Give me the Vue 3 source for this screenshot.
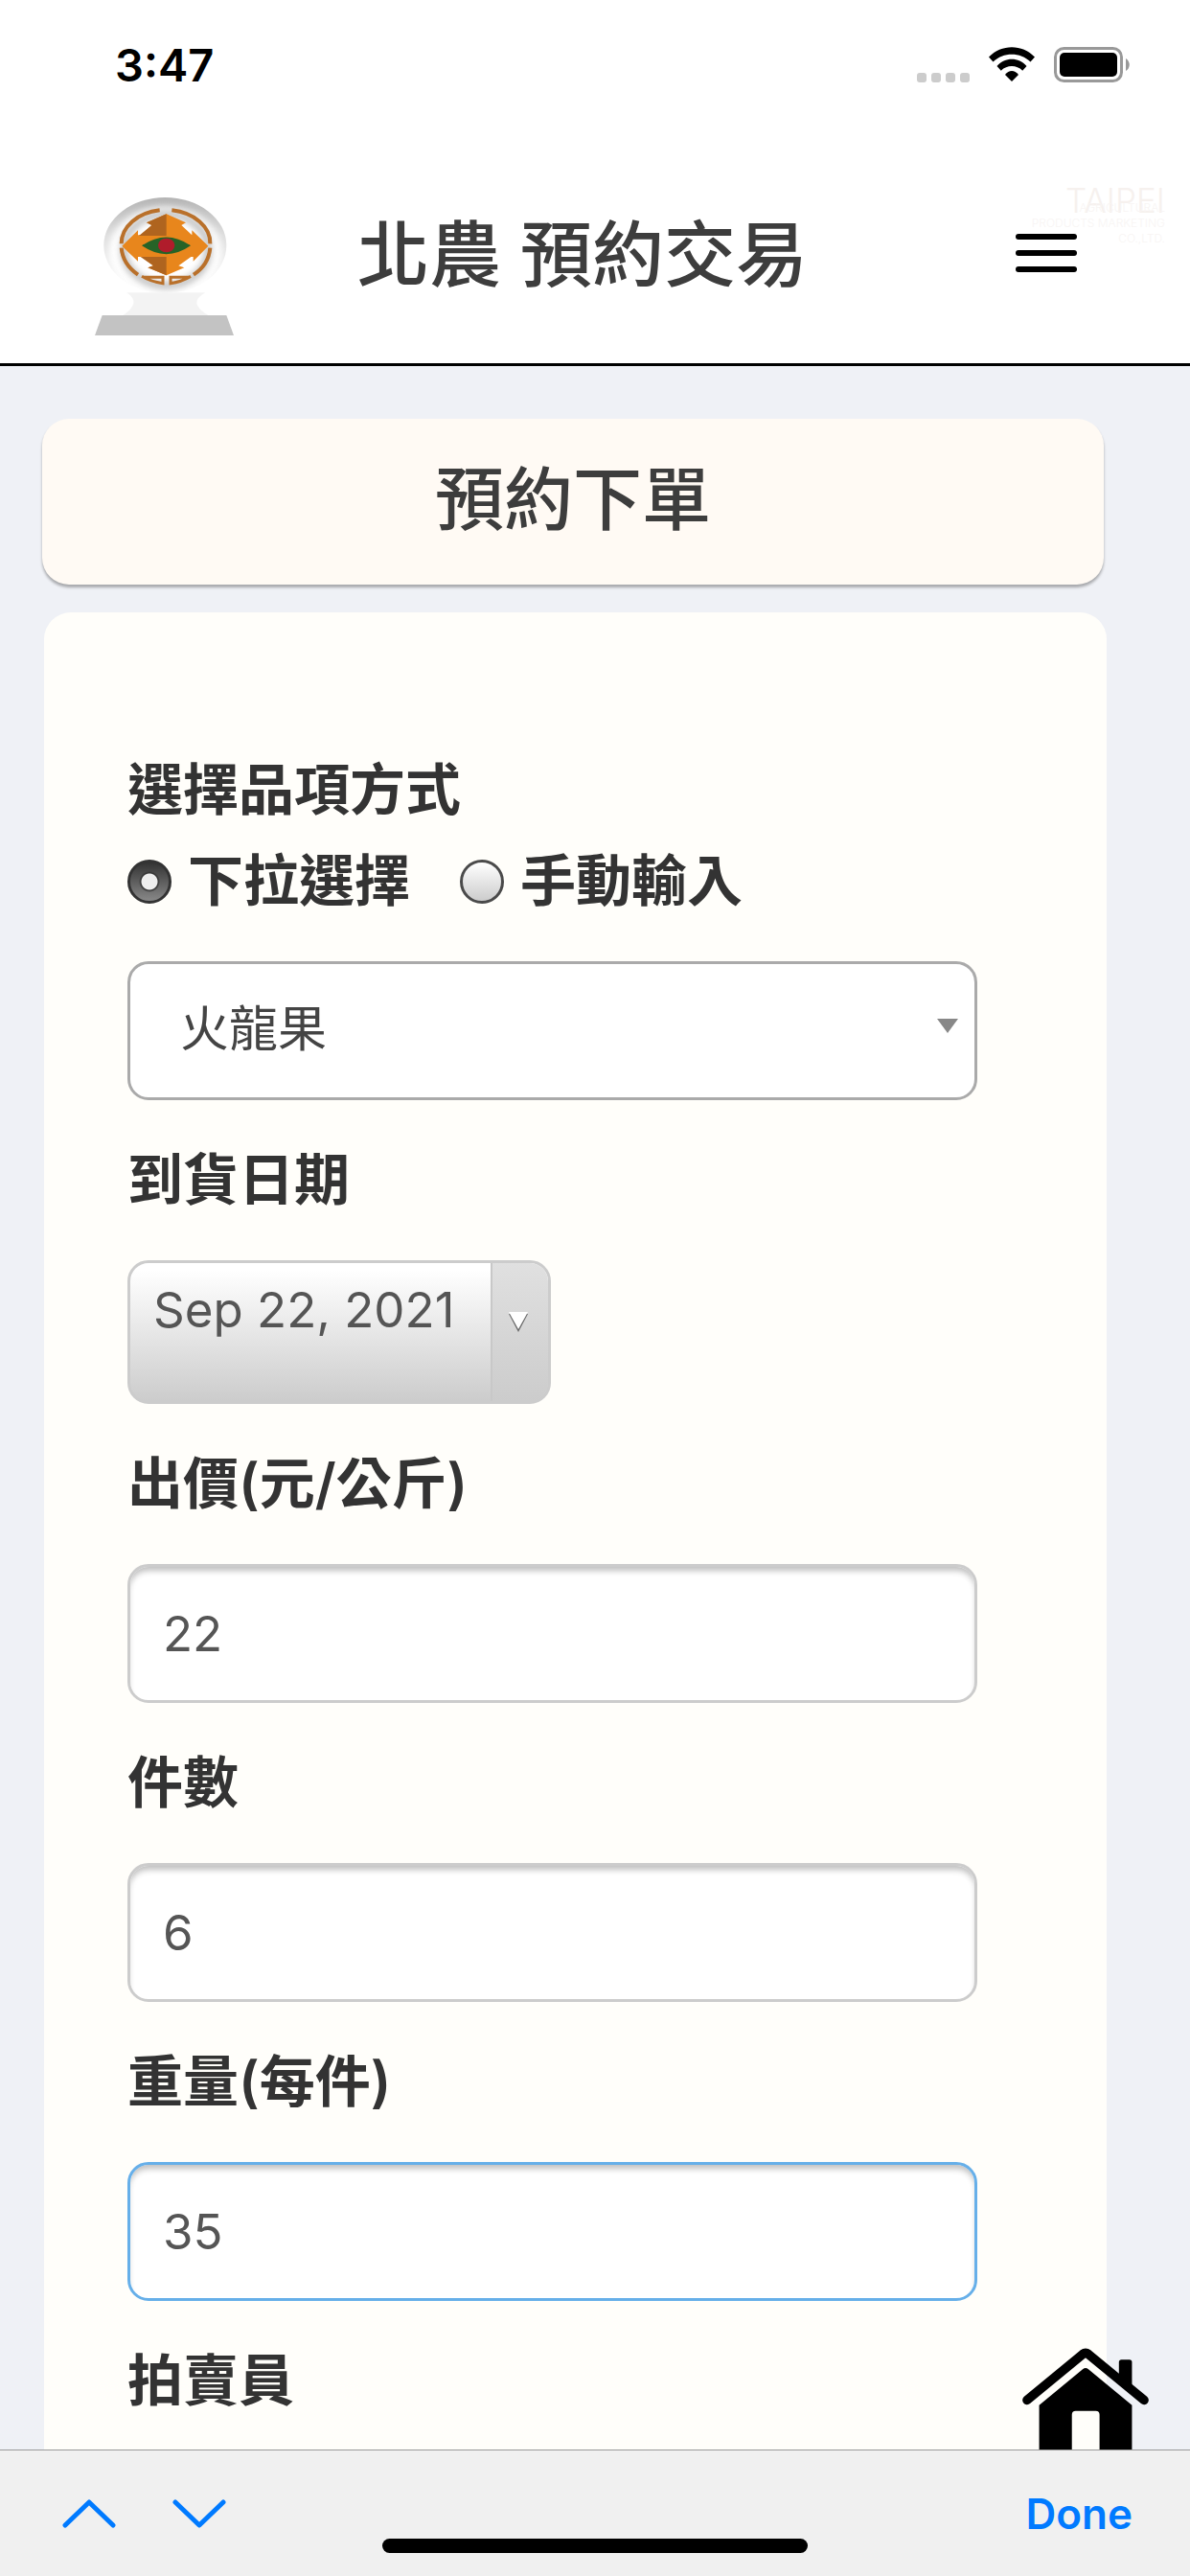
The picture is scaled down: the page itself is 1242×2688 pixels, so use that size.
<script setup>
import { ref } from 'vue'

const pickMode = ref('dropdown')
const item = ref('火龍果')
const price = ref('22')
const count = ref('6')
const weight = ref('35')
const focused = ref('weight')
</script>

<template>
  <div class="screen">
    <div class="status">
      <span class="clock">3:47</span>
      <div class="indicators">
        <span class="dots"><i></i><i></i><i></i><i></i></span>
        <svg class="wifi" viewBox="0 0 48 37" aria-hidden="true">
          <path d="M0 10.500C13-3.300 35-3.300 48 10.500L43.500 15.500C33 5 15 5 4.500 15.500Z" />
          <path d="M8.500 20C17 10.400 31 10.400 39.500 20L35.200 24.700C29 18.500 19 18.500 12.800 24.700Z" />
          <path d="M17 29C21 23.700 27 23.700 31 29L24 36Z" />
        </svg>
        <svg class="battery" viewBox="0 0 80 37" aria-hidden="true">
          <rect x="1.500" y="1.500" width="69" height="34" rx="9" fill="none" stroke="#999" stroke-width="3" />
          <rect x="6" y="6" width="60" height="25" rx="5" />
          <path d="M75 12c5 3 5 10 0 13z" fill="#999" />
        </svg>
      </div>
    </div>

    <header class="header">
      <svg class="logo" viewBox="57 48 435 432" aria-hidden="true">
        <defs>
          <linearGradient id="globe" x1="0" y1="0" x2="0" y2="1">
            <stop offset="0" stop-color="#b4b4b4" />
            <stop offset="0.400" stop-color="#dedede" />
            <stop offset="1" stop-color="#ffffff" />
          </linearGradient>
          <filter id="soft" x="-20%" y="-20%" width="140%" height="140%">
            <feGaussianBlur stdDeviation="11" />
          </filter>
          <clipPath id="disc"><ellipse cx="277" cy="198" rx="192" ry="150" /></clipPath>
        </defs>
        <ellipse cx="277" cy="198" rx="192" ry="150" fill="url(#globe)" />
        <g clip-path="url(#disc)">
          <ellipse cx="277" cy="218" rx="176" ry="140" fill="#fff" filter="url(#soft)" />
          <ellipse cx="280" cy="212" rx="132" ry="112" fill="none" stroke="#bdbdbd" stroke-width="22" filter="url(#soft)" />
        </g>
        <g fill="none" stroke="#b9702a" stroke-width="12">
          <path d="M260 88C190 96 140 140 140 193" />
          <path d="M298 88C368 96 420 140 418 193" />
          <path d="M140 206C143 240 160 268 192 290" />
          <path d="M418 206C415 240 400 268 366 290" />
          <path d="M204 295Q232 312 270 317V298H210" stroke-width="9" />
          <path d="M357 295Q328 312 294 317V298H351" stroke-width="9" />
        </g>
        <path d="M142 200L192 151V166H205L235 135L219 127L281 100L342 127L328 135L361 166V151L412 200L365 248V234H358L319 262L337 268L281 292L223 268L240 262L204 234H192V248Z" fill="#e8861c" />
        <path d="M281 100V168H195L235 135L219 127ZM281 234V292L223 268L240 262L200 234Z" fill="#af641f" />
        <path d="M204 199Q281 146 357 199Q281 252 204 199Z" fill="#266327" />
        <ellipse cx="281" cy="198" rx="26" ry="22" fill="#b01c2b" />
        <path d="M157 346H403Q345 378 412 417H145Q205 378 157 346Z" fill="#f3f3f3" />
        <path d="M80 417H469L492 480H57Z" fill="#c3c3c3" />
      </svg>
      <h1 class="brand">北農 預約交易</h1>
      <button class="menu" type="button" aria-label="選單"><i></i><i></i><i></i></button>
      <div class="watermark">
        <span class="city">TAIPEI</span>
        <span>AGRICULTURAL</span>
        <span>PRODUCTS MARKETING</span>
        <span>CO.,LTD.</span>
      </div>
    </header>

    <main class="main">
      <h2 class="title">預約下單</h2>

      <form class="card" @submit.prevent>
        <fieldset class="modes">
          <legend class="label">選擇品項方式</legend>
          <div class="options">
            <label class="option">
              <input v-model="pickMode" type="radio" name="mode" value="dropdown" />
              <span>下拉選擇</span>
            </label>
            <label class="option">
              <input v-model="pickMode" type="radio" name="mode" value="manual" />
              <span>手動輸入</span>
            </label>
          </div>
        </fieldset>
        <div class="select">
          <select v-model="item" aria-label="品項">
            <option>火龍果</option>
          </select>
        </div>

        <label class="label spaced" for="date">到貨日期</label>
        <button id="date" class="date" type="button">
          <span class="day">Sep 22, 2021</span>
          <span class="drop">
            <svg viewBox="0 0 24 24" aria-hidden="true">
              <path d="M2 3H22L12 22Z" fill="#666" />
              <path d="M2 1H22L12 19Z" fill="#fff" />
            </svg>
          </span>
        </button>

        <label class="label spaced" for="price">出價(元/公斤)</label>
        <input id="price" v-model="price" class="field" type="text" @focus="focused = 'price'" />

        <label class="label spaced" for="count">件數</label>
        <input id="count" v-model="count" class="field" type="text" @focus="focused = 'count'" />

        <label class="label spaced" for="weight">重量(每件)</label>
        <input
          id="weight"
          v-model="weight"
          class="field"
          :class="{ active: focused === 'weight' }"
          type="text"
          @focus="focused = 'weight'"
        />

        <p class="label spaced">拍賣員</p>
      </form>

      <a class="home" href="#" aria-label="首頁">
        <svg viewBox="500 748 398 398" aria-hidden="true">
          <path d="M515 912L690 768Q699 761 708 768L883 912" fill="none" stroke="#000" stroke-width="29" stroke-linecap="round" stroke-linejoin="round" />
          <path d="M804 845V793Q804 785 812 785H837Q845 785 845 793V880Z" />
          <path d="M553 928L690 815Q699 807 708 815L845 928V1146H743V958Q743 946 731 946H668Q656 946 656 958V1146H553Z" />
        </svg>
      </a>
    </main>

    <footer class="toolbar">
      <button type="button" aria-label="上一個">
        <svg viewBox="0 0 56 32" aria-hidden="true"><path d="M3 28L28 4L53 28" /></svg>
      </button>
      <button type="button" aria-label="下一個">
        <svg viewBox="0 0 56 32" aria-hidden="true"><path d="M3 4L28 28L53 4" /></svg>
      </button>
      <button class="done" type="button">Done</button>
      <span class="handle"></span>
    </footer>
  </div>
</template>

<style>
body {
  margin: 0;
}
</style>

<style scoped>
* {
  box-sizing: border-box;
}

.screen {
  display: flex;
  flex-direction: column;
  height: 100vh;
  overflow: hidden;
  background: #eff1f6;
  color: #333;
  font-family: Inter, "Noto Sans CJK TC", sans-serif;
}

button {
  margin: 0;
  padding: 0;
  border: 0;
  background: none;
  font-family: inherit;
}

.status {
  display: flex;
  align-items: center;
  justify-content: space-between;
  flex: none;
  height: 135px;
  padding: 0 62px 0 120px;
  background: #fff;
  color: #000;
}

.clock {
  font-size: 47px;
  font-weight: 600;
}

.indicators {
  display: flex;
  align-items: flex-end;
  gap: 20px;
}

.dots {
  display: flex;
  gap: 5px;
}

.dots i {
  width: 10px;
  height: 10px;
  border-radius: 3px;
  background: #ccc;
}

.wifi {
  width: 48px;
  height: 37px;
}

.battery {
  width: 80px;
  height: 37px;
}

.header {
  position: relative;
  display: flex;
  align-items: flex-start;
  flex: none;
  padding: 71px 118px 29px 99px;
  border-bottom: 3px solid #000;
  background: #fff;
}

.logo {
  flex: none;
  width: 145px;
  height: 144px;
}

.brand {
  flex: 1;
  margin: 0 0 0 129px;
  color: #3d3d3d;
  font-size: 75px;
  font-weight: 500;
  line-height: 120px;
}

.menu {
  display: flex;
  flex-direction: column;
  justify-content: center;
  gap: 11px;
  width: 64px;
  height: 116px;
}

.menu i {
  height: 6px;
  border-radius: 3px;
  background: #000;
}

.watermark {
  position: absolute;
  top: 56px;
  right: 26px;
  display: flex;
  flex-direction: column;
  align-items: flex-end;
  color: #f8f5f4;
  font-size: 12px;
  font-weight: 300;
  line-height: 16px;
}

.city {
  margin-bottom: -18px;
  color: #f6f1ee;
  font-size: 35px;
  line-height: 36px;
}

.main {
  position: relative;
  flex: 1;
  min-height: 0;
  overflow: hidden;
  padding: 55px 87px 0 44px;
}

.title {
  margin: 0 3px 29px 0;
  padding: 25px 0 31px;
  border-radius: 28px;
  background: #fffaf4;
  box-shadow: 0 3px 3px rgba(0, 0, 0, 0.3);
  color: #3d3d3d;
  font-size: 72px;
  font-weight: 500;
  line-height: 117px;
  text-align: center;
}

.card {
  margin-left: 2px;
  padding: 142px 135px 60px 87px;
  border-radius: 28px 28px 0 0;
  background: #fffefa;
}

.label {
  display: block;
  margin: 0;
  padding: 0;
  font-size: 58px;
  font-weight: 600;
  line-height: 87px;
}

.spaced {
  margin: 40px 0;
}

.modes {
  margin: 0 0 40px;
  padding: 0;
  border: 0;
}

.options {
  display: flex;
  gap: 52px;
  margin-top: 8px;
}

.option {
  display: flex;
  align-items: center;
  gap: 17px;
  font-size: 58px;
  font-weight: 600;
  line-height: 87px;
}

.option input {
  appearance: none;
  width: 46px;
  height: 46px;
  margin: 0;
  border: 3px solid #4a4a4a;
  border-radius: 50%;
  background: linear-gradient(#fff, #ccc);
}

.option input:checked {
  border-color: #333;
  background:
    radial-gradient(circle, #eee 8px, #333 9px, transparent 11px),
    linear-gradient(#333, #888);
}

.select {
  position: relative;
}

.select::after {
  content: "";
  position: absolute;
  top: 60px;
  right: 20px;
  border: 11px solid transparent;
  border-top: 15px solid #888;
  border-bottom: 0;
  pointer-events: none;
}

.select select {
  appearance: none;
  display: block;
  width: 100%;
  height: 145px;
  padding: 0 52px 4px;
  border: 3px solid #aaa;
  border-radius: 22px;
  background: #fff;
  color: #444;
  font-family: inherit;
  font-size: 51px;
}

.date {
  display: flex;
  width: 442px;
  height: 150px;
  overflow: hidden;
  border: 3px solid #ccc;
  border-radius: 22px;
  background: linear-gradient(#fff 5%, #ccc);
  color: #555;
  font-size: 51px;
  text-align: left;
}

.day {
  flex: 1;
  padding: 16px 0 0 24px;
  line-height: 66px;
  white-space: nowrap;
}

.drop {
  display: flex;
  align-items: center;
  justify-content: center;
  width: 60px;
  height: 100%;
  border-left: 2px solid #c8c8c8;
  background: linear-gradient(#e0e0e0, #ccc);
}

.drop svg {
  width: 24px;
  height: 24px;
  margin: -20px 4px 0 0;
}

.field {
  display: block;
  width: 100%;
  height: 145px;
  padding: 0 34px;
  border: 3px solid #ccc;
  border-radius: 22px;
  outline: 0;
  background: #fff;
  box-shadow: inset 0 6px 6px -2px rgba(0, 0, 0, 0.25);
  color: #555;
  font-family: inherit;
  font-size: 51px;
}

.field.active {
  border-color: #66afe9;
}

.home {
  position: absolute;
  right: 43px;
  bottom: -26px;
  width: 132px;
  height: 132px;
}

.home svg {
  display: block;
  width: 100%;
  height: 100%;
}

.toolbar {
  position: relative;
  display: flex;
  align-items: center;
  flex: none;
  gap: 59px;
  height: 132px;
  padding: 0 60px 0 65px;
  border-top: 1px solid #999;
  background: #f0f0f0;
}

.toolbar svg {
  display: block;
  width: 56px;
  height: 32px;
  fill: none;
  stroke: #007aff;
  stroke-width: 5;
  stroke-linecap: round;
  stroke-linejoin: round;
}

.done {
  margin-left: auto;
  color: #007aff;
  font-size: 44px;
  font-weight: 600;
}

.handle {
  position: absolute;
  bottom: 24px;
  left: 50%;
  width: 444px;
  height: 15px;
  margin-left: -222px;
  border-radius: 8px;
  background: #000;
}
</style>
